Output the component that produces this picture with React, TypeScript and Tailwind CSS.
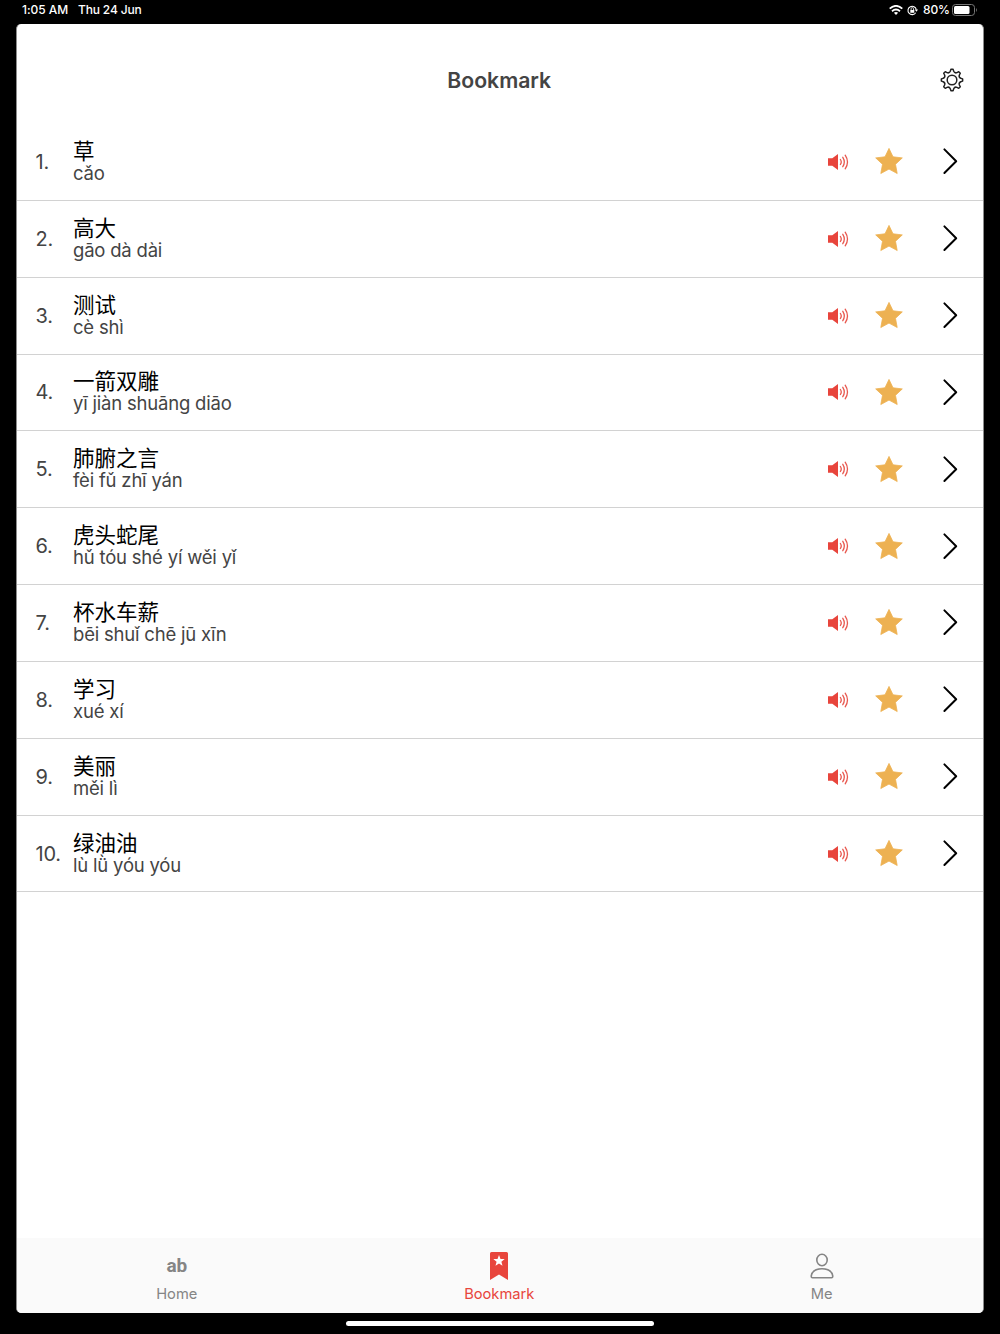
import React from "react";

const words = [
  ["草", "cǎo"],
  ["高大", "gāo dà dài"],
  ["测试", "cè shì"],
  ["一箭双雕", "yī jiàn shuāng diāo"],
  ["肺腑之言", "fèi fǔ zhī yán"],
  ["虎头蛇尾", "hǔ tóu shé yí wěi yǐ"],
  ["杯水车薪", "bēi shuǐ chē jū xīn"],
  ["学习", "xué xí"],
  ["美丽", "měi lì"],
  ["绿油油", "lù lǜ yóu yóu"],
];

function gearPath() {
  const at = (deg: number, r: number) => {
    const a = ((deg - 90) * Math.PI) / 180;
    return `${(12 + r * Math.cos(a)).toFixed(2)} ${(12 + r * Math.sin(a)).toFixed(2)}`;
  };
  let d = "";
  for (let k = 0; k < 8; k++) {
    const t = k * 45;
    d += `${k ? "L" : "M"}${at(t - 6, 10.7)} L${at(t + 6, 10.7)} L${at(t + 11, 8.9)} A2.6 2.6 0 0 0 ${at(t + 34, 8.9)} `;
  }
  return d + "Z";
}

const Gear = () => (
  <svg className="size-6" viewBox="0 0 24 24" fill="none" stroke="#222" strokeWidth="1.5" strokeLinejoin="round">
    <path d={gearPath()} />
    <circle cx="12" cy="12" r="4.8" />
  </svg>
);

const Speaker = () => (
  <svg className="h-[18px] w-[22px]" viewBox="0 0 22 18" fill="none">
    <path d="M1 5.200h4.300L11 1v16l-5.700-4.200H1z" fill="#e8453c" />
    <path d="M13.400 6.500q1.700 2.500 0 5M15.800 4.300q3 4.700 0 9.400M18.200 2.200q4.600 6.800 0 13.600" stroke="#e8584f" strokeWidth="1.300" strokeLinecap="round" />
  </svg>
);

const Star = () => (
  <svg className="h-[28px] w-[28px]" viewBox="0 0 28 28">
    <path d="M14 1.400l4 8.400 9.300 1.100-6.800 6.400 1.700 9.200-8.200-4.400-8.200 4.400 1.700-9.200L.7 10.900 10 9.800z" fill="#edb152" stroke="#edb152" strokeWidth=".8" strokeLinejoin="round" />
  </svg>
);

const Chevron = () => (
  <svg className="h-[28px] w-[16px]" viewBox="0 0 16 28" fill="none" stroke="#000" strokeWidth="2" strokeLinecap="round" strokeLinejoin="round">
    <path d="M2.400 2.400L14.200 14.200 2.400 26" />
  </svg>
);

function StatusBar() {
  return (
    <div className="flex h-6 items-center pb-[4px] pl-[22px] pr-[23px] text-[12px] font-medium leading-5 text-white">
      <span className="w-[56px] tracking-[-0.05px]">1:05 AM</span>
      <span className="tracking-[-0.15px]">Thu 24 Jun</span>
      <svg className="ml-auto h-[10px] w-[14px]" viewBox="0 0 14 10" fill="none" stroke="#fff" strokeWidth="1.800">
        <path d="M.7 3.700Q7-2 13.300 3.700M3 6.200q4-3.500 8 0" />
        <path d="M4.900 7.800Q7 6.200 9.100 7.800L7 10z" fill="#fff" stroke="none" />
      </svg>
      <svg className="ml-[4px] h-[11px] w-[11px]" viewBox="0 0 11 11" fill="none" stroke="#fff">
        <path d="M8.700 7.700A4.200 4.200 0 1 1 9.300 4.600" strokeWidth="1.100" />
        <path d="M7.700 4.500h3.300L9.500 6.700z" fill="#fff" stroke="none" />
        <path d="M3.300 5h4v2.800h-4z" fill="#fff" stroke="none" />
        <path d="M4.100 5V3.800a1.200 1.200 0 0 1 2.400 0V5" strokeWidth=".8" />
      </svg>
      <span className="ml-[5px] w-[29px] tracking-[-0.1px]">80%</span>
      <svg className="h-[12px] w-[25px]" viewBox="0 0 25 12" fill="none">
        <rect x=".5" y=".5" width="22" height="11" rx="3" stroke="#777" />
        <rect x="2" y="2" width="15.500" height="8" rx="1.500" fill="#fff" />
        <path d="M24 4q1.500 2 0 4z" fill="#888" />
      </svg>
    </div>
  );
}

function Tab({ icon, label, active }: { icon: React.ReactNode; label: string; active?: boolean }) {
  return (
    <div className={`flex flex-1 flex-col items-center pt-[13px] ${active ? "text-[#e8453c]" : "text-[#858585]"}`}>
      <div className="flex h-[29px] items-center justify-center">{icon}</div>
      <span className="mt-[4px] text-[14.700px] leading-[21px]">{label}</span>
    </div>
  );
}

export default function App() {
  return (
    <div className="flex h-[1334px] w-[1000px] flex-col overflow-hidden bg-black font-['Inter','Noto_Sans_CJK_SC',sans-serif]">
      <StatusBar />
      <main className="mx-[16px] flex h-[1289px] flex-col overflow-hidden rounded-[5px] border-x border-[#8c8c8c] bg-white">
        <header className="grid h-[100px] grid-cols-[1fr_auto_1fr] items-center pl-[18px] pr-[19.500px] pt-[12px]">
          <h1 className="col-start-2 text-[21.200px] font-semibold leading-7 text-[#444]">Bookmark</h1>
          <div className="justify-self-end"><Gear /></div>
        </header>
        <ol className="flex-1">
          {words.map(([hanzi, pinyin], i) => (
            <li key={hanzi} className="flex h-[76.850px] items-center border-b border-[#d2d2d2] pl-[18.500px] pr-[25px]">
              <span className="w-[37.500px] text-[20px] leading-7 tracking-[-0.200px] text-[#444]">{i + 1}.</span>
              <div className="flex flex-1 flex-col">
                <span className="-mt-[1px] h-[23px] font-['Noto_Sans_CJK_SC',sans-serif] text-[21.500px] leading-[22px] text-black">{hanzi}</span>
                <span className="h-[22px] text-[18.500px] leading-[22px] tracking-[-0.200px] text-[#444]">{pinyin}</span>
              </div>
              <Speaker />
              <div className="-mt-[1px] ml-[26px]"><Star /></div>
              <div className="-mt-[1px] ml-[39px]"><Chevron /></div>
            </li>
          ))}
        </ol>
        <nav className="-ml-[1.500px] flex h-[75px] bg-[#fafafa]">
          <Tab label="Home" icon={<span className="mt-px font-['Roboto',sans-serif] text-[19px] font-bold leading-5 tracking-[-0.300px]">ab</span>} />
          <Tab
            active
            label="Bookmark"
            icon={
              <svg className="h-[28px] w-[18px]" viewBox="0 0 18 28">
                <path d="M1.500 0h15Q18 0 18 1.500V28l-9-5.500L0 28V1.500Q0 0 1.500 0z" fill="#e8453c" />
                <path d="M9 3l1.500 3.900 4.200.2-3.300 2.600 1.100 4L9 11.400l-3.500 2.300 1.100-4-3.300-2.600 4.200-.2z" fill="#fff" />
              </svg>
            }
          />
          <Tab
            label="Me"
            icon={
              <svg className="h-[26px] w-[24px]" viewBox="0 0 24 26" fill="none" stroke="#858585" strokeWidth="1.600">
                <ellipse cx="12" cy="7" rx="5.200" ry="5.700" />
                <path d="M2.500 24.700Q1.200 24.700 1.200 23.200C2 18 6.500 15.700 12 15.700s10 2.300 10.800 7.500q0 1.500-1.300 1.500z" />
              </svg>
            }
          />
        </nav>
      </main>
      <div className="mt-[8px] h-[5px] w-[308px] self-center rounded-full bg-white" />
    </div>
  );
}
